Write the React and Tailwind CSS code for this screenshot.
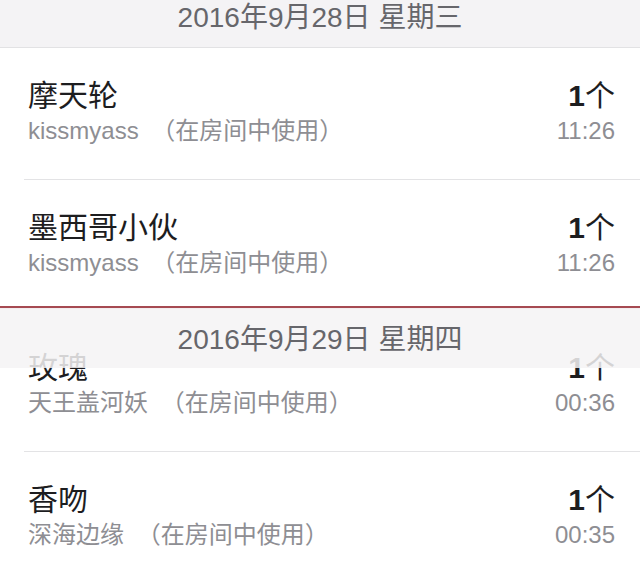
const FONT = { fontFamily: '"Liberation Sans", "Noto Sans CJK SC", sans-serif' };

function DayHeader({ text, className = '' }) {
  return (
    <div className={`flex items-center justify-center ${className}`}>
      <span className="text-[28px] leading-none text-[#66666b]">{text}</span>
    </div>
  );
}

function GiftRow({ name, from, count, time, divider = true, height = 'h-[131px]' }) {
  return (
    <div className={`${height} pl-[24px]`}>
      <div className={`flex h-full pl-[4px] pr-[25px] pt-[30px] ${divider ? 'border-b border-[#e3e3e5]' : ''}`}>
        <div className="flex-1">
          <div className="text-[30px] leading-[36px] text-[#1d1d1f]">{name}</div>
          <div className="mt-[2px] text-[24px] leading-[30px] text-[#8e8e93]">
            {from} <span className="ml-[6px]">（在房间中使用）</span>
          </div>
        </div>
        <div className="flex flex-col items-end">
          <div className="text-[30px] leading-[36px] text-[#1d1d1f]">
            <span className="font-semibold">{count}</span>个
          </div>
          <div className="mt-[2px] text-[24px] leading-[30px] text-[#8e8e93]">{time}</div>
        </div>
      </div>
    </div>
  );
}

export default function App() {
  return (
    <div className="h-[568px] w-[640px] overflow-hidden bg-white" style={FONT}>
      {/* sticky header of the first day, scrolled partly out */}
      <div className="h-[48px] overflow-hidden border-b border-[#e2e2e4] bg-[#f4f3f5]">
        <DayHeader text="2016年9月28日 星期三" className="-mt-[12px] h-[60px]" />
      </div>

      <GiftRow name="摩天轮" from="kissmyass" count="1" time="11:26" height="h-[132px]" />
      <GiftRow name="墨西哥小伙" from="kissmyass" count="1" time="11:26" divider={false} height="h-[126px]" />

      <div className="h-[2px] bg-[#a64a52] shadow-[0_1px_1px_rgba(200,120,130,0.5)]" />

      <div className="relative pt-[12px]">
        <div className="absolute inset-x-0 top-0 z-10 h-[60px] bg-[#f4f3f5]/85">
          <DayHeader text="2016年9月29日 星期四" className="h-full translate-y-[2px]" />
        </div>
        <GiftRow name="玫瑰" from="天王盖河妖" count="1" time="00:36" height="h-[132px]" />
        <GiftRow name="香吻" from="深海边缘" count="1" time="00:35" />
      </div>
    </div>
  );
}
